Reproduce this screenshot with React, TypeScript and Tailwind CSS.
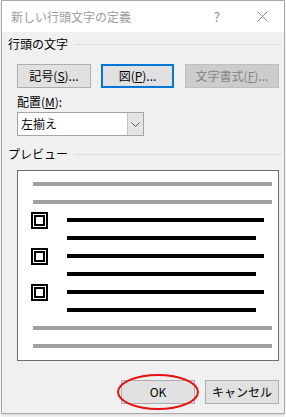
import React from "react";

const font = { fontFamily: '"Noto Sans CJK JP", "Noto Sans", sans-serif' };

function GrayRow() {
  return (
    <div className="flex h-[18px] items-center">
      <div className="ml-[15px] h-[4px] w-[239px] bg-[#a0a0a0]" />
    </div>
  );
}

function Bullet() {
  return (
    <div className="flex h-[17px] w-[17px] items-center justify-center border-2 border-black bg-white">
      <div className="flex h-[11px] w-[11px] items-center justify-center border-2 border-black bg-white" />
    </div>
  );
}

function BulletRow() {
  return (
    <div className="flex h-[18px] items-center">
      <div className="ml-[13px]">
        <Bullet />
      </div>
      <div className="ml-[19px] h-[4px] w-[197px] bg-black" />
    </div>
  );
}

function ShortRow() {
  return (
    <div className="flex h-[18px] items-center">
      <div className="ml-[49px] h-[4px] w-[189px] bg-black" />
    </div>
  );
}

export default function App() {
  return (
    <div className="h-[417px] w-[286px] bg-white text-[12px] leading-[16px] text-black" style={font}>
      <div className="ml-[1px] flex h-[414px] w-[284px] flex-col border border-[#aaaaaa] bg-[#f0f0f0] shadow-[0_2px_3px_rgba(0,0,0,0.15)]">
        {/* Title bar */}
        <div className="flex h-[31px] items-center bg-white">
          <span className="ml-[9px] text-[12px] text-[#9b9b9b]">新しい行頭文字の定義</span>
          <span className="ml-auto mr-[37px] text-[13px] text-[#8a8a8a]">?</span>
          <svg width="11" height="11" viewBox="0 0 11 11" className="mr-[16px]">
            <path d="M0.5 0.5 L10.5 10.5 M10.5 0.5 L0.5 10.5" stroke="#8a8a8a" strokeWidth="1" />
          </svg>
        </div>

        {/* Group: 行頭の文字 */}
        <div className="mt-[4px] flex h-[16px] items-center pl-[6px]">
          <span>行頭の文字</span>
          <div className="ml-[6px] mr-[3px] h-px flex-1 bg-[#dcdcdc]" />
        </div>

        <div className="mt-[12px] flex pl-[15px]">
          <div className="flex h-[24px] w-[74px] items-center justify-center border border-[#adadad] bg-[#e1e1e1]">
            記号(<span className="underline">S</span>)...
          </div>
          <div className="ml-[10px] flex h-[24px] w-[73px] items-center justify-center border-2 border-[#0078d7] bg-[#e1e1e1]">
            図(<span className="underline">P</span>)...
          </div>
          <div className="ml-[11px] flex h-[24px] w-[94px] items-center justify-center border border-[#bfbfbf] bg-[#cccccc] text-[#838383]">
            文字書式(<span className="underline">F</span>)...
          </div>
        </div>

        <div className="mt-[6px] pl-[15px]">
          配置(<span className="underline">M</span>):
        </div>

        <div className="mt-[2px] pl-[15px]">
          <div className="flex h-[24px] w-[127px] border border-[#a6a6a6] bg-white">
            <div className="flex flex-1 items-center pl-[3px]">左揃え</div>
            <div className="flex w-[16px] items-center justify-center border-l border-[#c4c4c4] bg-[#e5e5e5]">
              <svg width="9" height="5" viewBox="0 0 9 5">
                <path d="M0.5 0.5 L4.5 4.5 L8.5 0.5" fill="none" stroke="#555" strokeWidth="1" />
              </svg>
            </div>
          </div>
        </div>

        {/* Group: プレビュー */}
        <div className="mt-[10px] flex h-[16px] items-center pl-[6px]">
          <span>プレビュー</span>
          <div className="ml-[6px] mr-[3px] h-px flex-1 bg-[#dcdcdc]" />
        </div>

        <div className="mt-[8px] pl-[15px]">
          <div className="flex h-[191px] w-[262px] flex-col border border-[#6d6d6d] bg-white pt-[4px]">
            <GrayRow />
            <GrayRow />
            <BulletRow />
            <ShortRow />
            <BulletRow />
            <ShortRow />
            <BulletRow />
            <ShortRow />
            <GrayRow />
            <GrayRow />
          </div>
        </div>

        <div className="mt-[19px] flex pl-[119px]">
          <div className="relative flex h-[24px] w-[74px] items-center justify-center border border-[#adadad] bg-[#e1e1e1]">
            OK
            <div className="absolute -left-[5px] -top-[7px] h-[36px] w-[82px] rounded-[50%] border-2 border-[#e81010]" />
          </div>
          <div className="ml-[10px] flex h-[24px] w-[74px] items-center justify-center border border-[#adadad] bg-[#e1e1e1]">
            キャンセル
          </div>
        </div>
      </div>
    </div>
  );
}
